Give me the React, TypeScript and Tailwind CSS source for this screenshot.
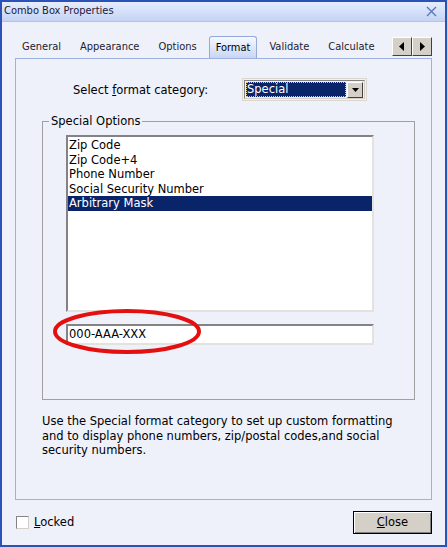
import type { ReactNode } from "react";

const tabs = ["General", "Appearance", "Options", "Format", "Validate", "Calculate"];
const items = ["Zip Code", "Zip Code+4", "Phone Number", "Social Security Number", "Arbitrary Mask"];

function Sunken({ className, children }: { className: string; children?: ReactNode }) {
  return (
    <div className={`border-2 border-t-[#848284] border-l-[#848284] border-r-[#e4e2dc] border-b-[#e4e2dc] bg-white ${className}`}>
      {children}
    </div>
  );
}

function ArrowBtn({ dir }: { dir: "l" | "r" }) {
  return (
    <div className="flex h-[19px] w-[20px] items-center justify-center border border-t-white border-l-white border-r-[#404040] border-b-[#404040] bg-[#d4d0c8]">
      <svg width="6" height="9" viewBox="0 0 6 9">
        {dir === "l" ? <path d="M5 0 L0 4.5 L5 9 Z" fill="#000" /> : <path d="M1 0 L6 4.5 L1 9 Z" fill="#000" />}
      </svg>
    </div>
  );
}

export default function App() {
  return (
    <div className="relative flex h-[547px] w-[447px] flex-col border-2 border-[#2a52b8] bg-[#eef0fa] font-['DejaVu_Sans_Condensed','DejaVu_Sans',sans-serif] text-[11px] text-black">
      <div className="flex h-[20px] items-center justify-between border-b border-[#b3c4ea] bg-gradient-to-b from-[#e6edfd] to-[#c4d3f5] pl-[2px] pr-[8px]">
        <span className="text-[#1a1a40]">Combo Box Properties</span>
        <svg width="11" height="11" viewBox="0 0 11 11">
          <path d="M1 1 L10 10 M10 1 L1 10" stroke="#5a78b8" strokeWidth="1.4" />
        </svg>
      </div>

      <div className="flex flex-1 flex-col px-[13px] pt-[14px]">
        <div className="flex h-[22px] items-end gap-[5px]">
          {tabs.map((t) =>
            t === "Format" ? (
              <div
                key={t}
                className="-mb-px flex h-[23px] items-center rounded-t-[3px] border border-b-0 border-[#94a9d9] bg-gradient-to-b from-[#f6f8ff] to-[#c6d4f4] px-[6px]"
              >
                {t}
              </div>
            ) : (
              <div key={t} className="flex h-[21px] items-center px-[7px] text-[#1c1c30]">
                {t}
              </div>
            )
          )}
          <div className="ml-auto mb-[1px] flex self-center">
            <ArrowBtn dir="l" />
            <ArrowBtn dir="r" />
          </div>
        </div>

        <div className="flex h-[442px] flex-col border border-[#9cb1e0] font-['DejaVu_Sans',sans-serif] text-[11.5px]">
          <div className="mt-[19px] flex h-[23px] items-center pl-[57px]">
            <span className="mt-[3px] w-[169px]">
              Select <span className="underline">f</span>ormat category:
            </span>
            <div className="flex h-[23px] w-[125px] items-center border border-[#d8d6ce] bg-[#eef0fa] p-[1px]">
              <div className="flex h-full flex-1 items-center border border-t-[#848284] border-l-[#848284] border-r-[#d4d0c8] border-b-[#d4d0c8]">
                <div className="m-[1px] flex h-[15px] flex-1 items-center border border-dotted border-[#d8c890] bg-[#0a246a] text-white">
                  Special
                </div>
                <div className="mr-[1px] flex h-[16px] w-[16px] items-center justify-center border border-t-white border-l-white border-r-[#404040] border-b-[#404040] bg-[#d4d0c8]">
                  <svg width="7" height="4" viewBox="0 0 7 4">
                    <path d="M0 0 H7 L3.5 4 Z" fill="#000" />
                  </svg>
                </div>
              </div>
            </div>
          </div>

          <div className="relative ml-[26px] mt-[20px] h-[279px] w-[373px] border border-[#a0a0a0]">
            <span className="absolute -top-[8px] left-[6px] bg-[#eef0fa] px-[2px] leading-[15px]">Special Options</span>
            <Sunken className="ml-[23px] mt-[13px] h-[177px] w-[308px] pt-[1px]">
              {items.map((it) => (
                <div
                  key={it}
                  className={`h-[14.6px] pl-[1px] leading-[15px] ${it === "Arbitrary Mask" ? "bg-[#0a246a] text-white" : ""}`}
                >
                  {it}
                </div>
              ))}
            </Sunken>
            <Sunken className="ml-[23px] mt-[12px] flex h-[21px] w-[308px] items-center pl-[1px]">000-AAA-XXX</Sunken>
          </div>

          <p className="ml-[26px] mt-[14px] leading-[14.5px]">
            Use the Special format category to set up custom formatting
            <br />
            and to display phone numbers, zip/postal codes,and social
            <br />
            security numbers.
          </p>
        </div>

        <div className="mt-[11px] flex h-[23px] items-center justify-between text-[11.5px] font-['DejaVu_Sans',sans-serif]">
          <div className="ml-[1px] flex items-center gap-[5px]">
            <div className="h-[13px] w-[13px] border border-t-[#848284] border-l-[#848284] border-r-[#d4d0c8] border-b-[#d4d0c8] bg-white" />
            <span>
              <span className="underline">L</span>ocked
            </span>
          </div>
          <div className="flex h-[23px] w-[79px] items-center justify-center border border-black bg-[#d4d0c8] shadow-[inset_1px_1px_0_#fff,inset_-1px_-1px_0_#808080]">
            <span>
              <span className="underline">C</span>lose
            </span>
          </div>
        </div>
      </div>

      <svg className="pointer-events-none absolute left-[51px] top-[307px]" width="148" height="45" viewBox="0 0 148 45">
        <ellipse cx="74" cy="22.5" rx="72" ry="20.5" fill="none" stroke="#e3100f" strokeWidth="4" />
      </svg>
    </div>
  );
}
